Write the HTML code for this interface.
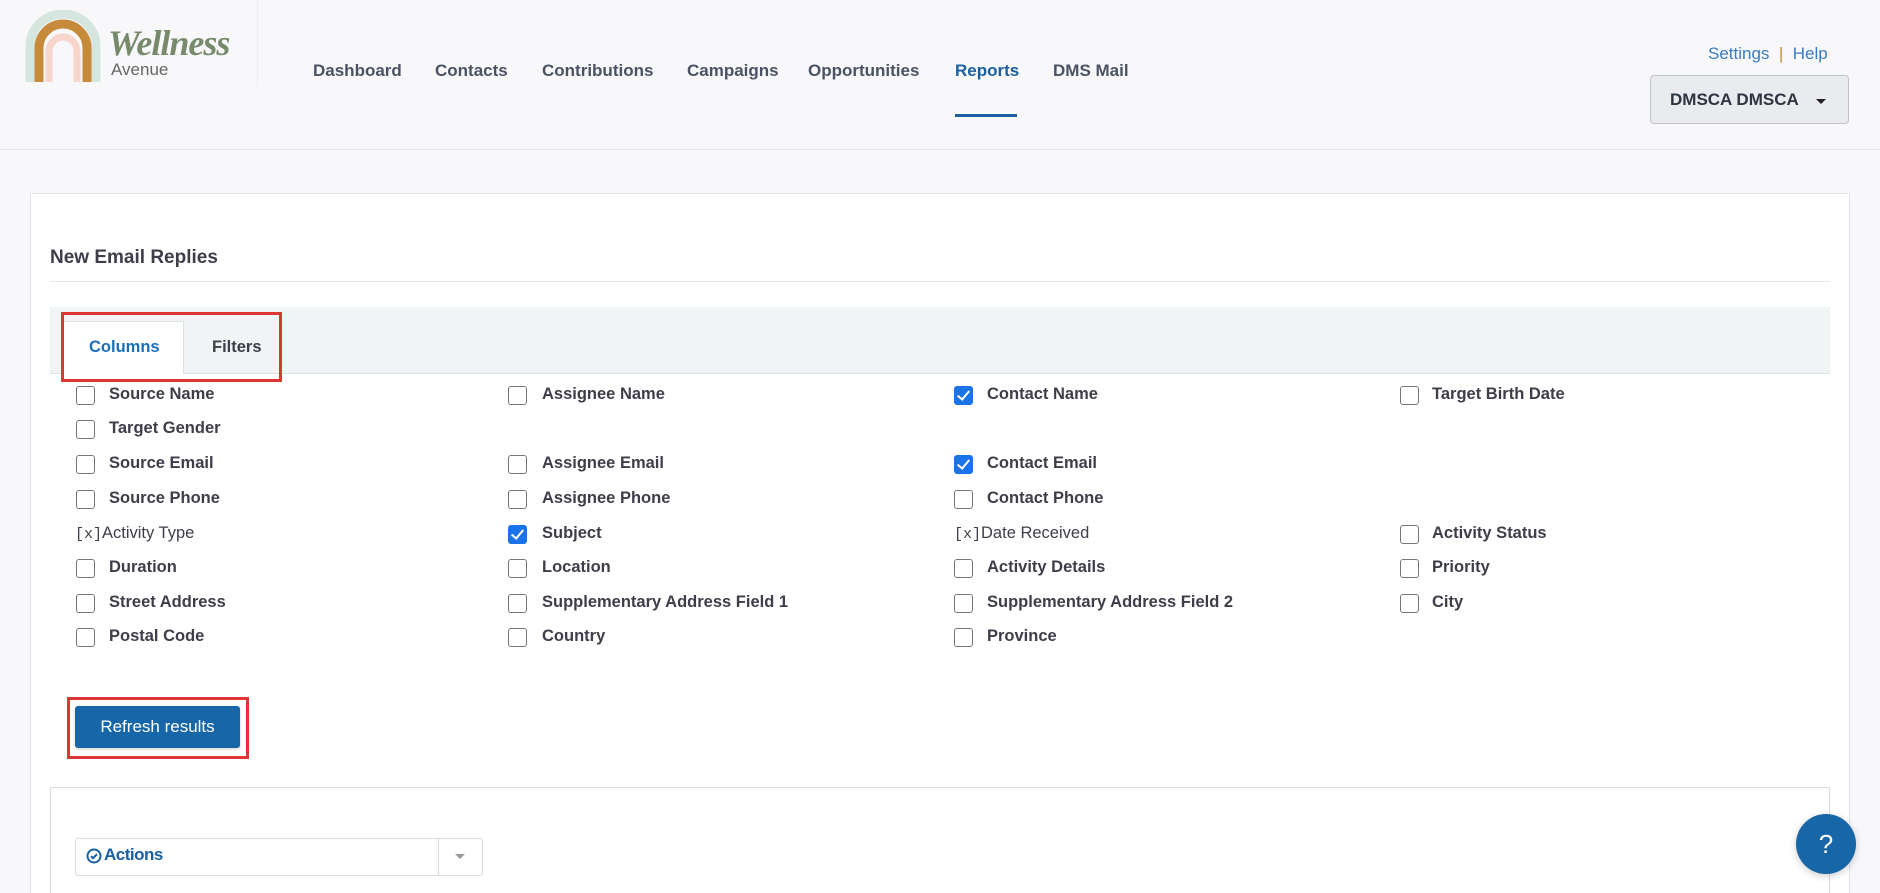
<!DOCTYPE html>
<html style="width:1880px;height:893px;overflow:hidden"><head><meta charset="utf-8"><style>
*{box-sizing:border-box;margin:0;padding:0}
body{width:1880px;height:893px;overflow:hidden;background:#f8f8fa;font-family:"Liberation Sans",sans-serif;position:relative;color:#3e3e4a}
.a{position:absolute}
.nav{position:absolute;top:61px;font-size:17px;font-weight:bold;color:#4a5264}
.cb{position:absolute;width:19px;height:19px;border:1.5px solid #767676;border-radius:3px;background:#fff}
.cb.on{background:#1a73e8;border-color:#1a73e8}
.cb.on::after{content:"";position:absolute;left:5px;top:1px;width:5px;height:10px;border:solid #fff;border-width:0 2.5px 2.5px 0;transform:rotate(40deg)}
.lb{position:absolute;font-size:16.5px;font-weight:bold;color:#3e3e4a;white-space:nowrap}
.x{position:absolute;font-size:16.5px;color:#3e3e4a;white-space:nowrap}
.x span{font-family:"Liberation Mono",monospace;font-size:15px}
</style></head><body>
<div class="a" style="left:0;top:0;width:1880px;height:150px;border-bottom:1px solid #e6e6ea"></div>
<svg class="a" style="left:22px;top:10px" width="82" height="72" viewBox="0 0 82 72">
<path d="M8 72 V36 A33 32 0 0 1 74 36 V72" fill="none" stroke="#d5e6df" stroke-width="9"/>
<path d="M17 72 V38 A24 24 0 0 1 65 38 V72" fill="none" stroke="#c68a3a" stroke-width="9"/>
<path d="M27 72 V42 A14 15 0 0 1 55 42 V72" fill="none" stroke="#f7d4cc" stroke-width="7"/>
</svg>
<div class="a" style="left:108px;top:22px;font-family:'Liberation Serif',serif;font-style:italic;font-weight:bold;font-size:36px;color:#778a6c;letter-spacing:-1px">Wellness</div>
<div class="a" style="left:111px;top:60px;font-size:17px;color:#666">Avenue</div>
<div class="a" style="left:257px;top:0;width:1px;height:86px;background:#ececf0"></div>
<div class="nav" style="left:313px">Dashboard</div>
<div class="nav" style="left:435px">Contacts</div>
<div class="nav" style="left:542px">Contributions</div>
<div class="nav" style="left:687px">Campaigns</div>
<div class="nav" style="left:808px">Opportunities</div>
<div class="nav" style="left:955px;color:#1a5fa0">Reports</div>
<div class="a" style="left:955px;top:114px;width:62px;height:3px;background:#1a5fa0"></div>
<div class="nav" style="left:1053px">DMS Mail</div>
<div class="a" style="left:1708px;top:44px;font-size:17px;color:#3a7cc0">Settings &nbsp;<span style="color:#c68a3a">|</span>&nbsp; Help</div>
<div class="a" style="left:1650px;top:75px;width:199px;height:49px;background:#e9ebef;border:1px solid #c0c4cc;border-radius:4px;font-size:17px;font-weight:bold;color:#2e3440;padding:14px 0 0 19px">DMSCA DMSCA<span style="position:absolute;left:165px;top:23px;border:5px solid transparent;border-top:5px solid #222;border-bottom:0"></span></div>
<div class="a" style="left:30px;top:193px;width:1820px;height:700px;background:#fff;border:1px solid #e2e2e6;border-bottom:none"></div>
<div class="a" style="left:50px;top:247px;font-size:19px;font-weight:bold;color:#3e3e4a">New Email Replies</div>
<div class="a" style="left:50px;top:281px;width:1780px;height:1px;background:#e6e6e6"></div>
<div class="a" style="left:50px;top:307px;width:1780px;height:67px;background:#f1f4f5;border-bottom:1px solid #dde2e4"></div>
<div class="a" style="left:63px;top:321px;width:121px;height:53px;background:#fff;border:1px solid #dde2e4;border-bottom:none"></div>
<div class="a" style="left:89px;top:338px;font-size:16.5px;font-weight:bold;color:#1a6fb8">Columns</div>
<div class="a" style="left:212px;top:338px;font-size:16.5px;font-weight:bold;color:#3e3e4a">Filters</div>
<div class="a" style="left:61px;top:312px;width:221px;height:70px;border:3px solid #e03535"></div>
<div class="cb" style="left:76px;top:386px"></div><div class="lb" style="left:109px;top:385px">Source Name</div>
<div class="cb" style="left:508px;top:386px"></div><div class="lb" style="left:542px;top:385px">Assignee Name</div>
<div class="cb on" style="left:954px;top:386px"></div><div class="lb" style="left:987px;top:385px">Contact Name</div>
<div class="cb" style="left:1400px;top:386px"></div><div class="lb" style="left:1432px;top:385px">Target Birth Date</div>
<div class="cb" style="left:76px;top:420px"></div><div class="lb" style="left:109px;top:419px">Target Gender</div>
<div class="cb" style="left:76px;top:455px"></div><div class="lb" style="left:109px;top:454px">Source Email</div>
<div class="cb" style="left:508px;top:455px"></div><div class="lb" style="left:542px;top:454px">Assignee Email</div>
<div class="cb on" style="left:954px;top:455px"></div><div class="lb" style="left:987px;top:454px">Contact Email</div>
<div class="cb" style="left:76px;top:490px"></div><div class="lb" style="left:109px;top:489px">Source Phone</div>
<div class="cb" style="left:508px;top:490px"></div><div class="lb" style="left:542px;top:489px">Assignee Phone</div>
<div class="cb" style="left:954px;top:490px"></div><div class="lb" style="left:987px;top:489px">Contact Phone</div>
<div class="x" style="left:75px;top:524px"><span>[x]</span>Activity Type</div>
<div class="cb on" style="left:508px;top:525px"></div><div class="lb" style="left:542px;top:524px">Subject</div>
<div class="x" style="left:954px;top:524px"><span>[x]</span>Date Received</div>
<div class="cb" style="left:1400px;top:525px"></div><div class="lb" style="left:1432px;top:524px">Activity Status</div>
<div class="cb" style="left:76px;top:559px"></div><div class="lb" style="left:109px;top:558px">Duration</div>
<div class="cb" style="left:508px;top:559px"></div><div class="lb" style="left:542px;top:558px">Location</div>
<div class="cb" style="left:954px;top:559px"></div><div class="lb" style="left:987px;top:558px">Activity Details</div>
<div class="cb" style="left:1400px;top:559px"></div><div class="lb" style="left:1432px;top:558px">Priority</div>
<div class="cb" style="left:76px;top:594px"></div><div class="lb" style="left:109px;top:593px">Street Address</div>
<div class="cb" style="left:508px;top:594px"></div><div class="lb" style="left:542px;top:593px">Supplementary Address Field 1</div>
<div class="cb" style="left:954px;top:594px"></div><div class="lb" style="left:987px;top:593px">Supplementary Address Field 2</div>
<div class="cb" style="left:1400px;top:594px"></div><div class="lb" style="left:1432px;top:593px">City</div>
<div class="cb" style="left:76px;top:628px"></div><div class="lb" style="left:109px;top:627px">Postal Code</div>
<div class="cb" style="left:508px;top:628px"></div><div class="lb" style="left:542px;top:627px">Country</div>
<div class="cb" style="left:954px;top:628px"></div><div class="lb" style="left:987px;top:627px">Province</div>
<div class="a" style="left:67px;top:697px;width:182px;height:62px;border:3px solid #e03535"></div>
<div class="a" style="left:75px;top:706px;width:165px;height:42px;background:#1766a8;border-radius:3px;color:#fff;font-size:17px;text-align:center;line-height:42px;box-shadow:0 1px 3px rgba(0,0,0,.2)">Refresh results</div>
<div class="a" style="left:50px;top:787px;width:1780px;height:106px;border:1px solid #dcdcdc;border-bottom:none;background:#fff"></div>
<div class="a" style="left:75px;top:838px;width:408px;height:38px;border:1px solid #d6dce4;border-radius:3px;background:#fff"></div>
<div class="a" style="left:438px;top:839px;width:1px;height:36px;background:#d6dce4"></div>
<div class="a" style="left:455px;top:854px;border:5px solid transparent;border-top:5px solid #999;border-bottom:0"></div>
<svg class="a" style="left:86px;top:848px" width="16" height="16" viewBox="0 0 16 16"><circle cx="8" cy="8" r="6.5" fill="none" stroke="#1a5fa0" stroke-width="2"/><path d="M5 8.2l2 2 4-4" fill="none" stroke="#1a5fa0" stroke-width="2"/></svg>
<div class="a" style="left:104px;top:845px;font-size:17px;font-weight:bold;color:#1a5fa0;letter-spacing:-.5px">Actions</div>
<div class="a" style="left:1796px;top:814px;width:60px;height:60px;border-radius:50%;background:#1766a8;color:#fff;font-size:26px;text-align:center;line-height:60px;box-shadow:0 2px 8px rgba(0,0,0,.2)">?</div>
</body></html>
